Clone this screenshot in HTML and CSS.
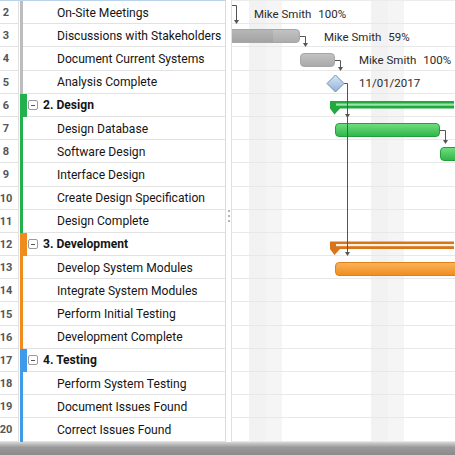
FILE: index.html
```html
<!DOCTYPE html>
<html>
<head>
<meta charset="utf-8">
<link rel="stylesheet" href="styles.css">
</head>
<body>
<div class="frame">
  <div class="main">
    <div class="left">
      <div class="row"><span class="num">2</span><span class="cbar gray"></span><span class="name">On-Site Meetings</span></div>
      <div class="row"><span class="num">3</span><span class="cbar gray"></span><span class="name">Discussions with Stakeholders</span></div>
      <div class="row"><span class="num">4</span><span class="cbar gray"></span><span class="name">Document Current Systems</span></div>
      <div class="row"><span class="num">5</span><span class="cbar gray"></span><span class="name">Analysis Complete</span></div>
      <div class="row"><span class="num">6</span><span class="cbar green wide"></span><span class="name sum"><span class="minus"></span>2. Design</span></div>
      <div class="row"><span class="num">7</span><span class="cbar green"></span><span class="name">Design Database</span></div>
      <div class="row"><span class="num">8</span><span class="cbar green"></span><span class="name">Software Design</span></div>
      <div class="row"><span class="num">9</span><span class="cbar green"></span><span class="name">Interface Design</span></div>
      <div class="row"><span class="num">10</span><span class="cbar green"></span><span class="name">Create Design Specification</span></div>
      <div class="row"><span class="num">11</span><span class="cbar green"></span><span class="name">Design Complete</span></div>
      <div class="row"><span class="num">12</span><span class="cbar orange wide"></span><span class="name sum"><span class="minus"></span>3. Development</span></div>
      <div class="row"><span class="num">13</span><span class="cbar orange"></span><span class="name">Develop System Modules</span></div>
      <div class="row"><span class="num">14</span><span class="cbar orange"></span><span class="name">Integrate System Modules</span></div>
      <div class="row"><span class="num">15</span><span class="cbar orange"></span><span class="name">Perform Initial Testing</span></div>
      <div class="row"><span class="num">16</span><span class="cbar orange"></span><span class="name">Development Complete</span></div>
      <div class="row"><span class="num">17</span><span class="cbar blue wide"></span><span class="name sum"><span class="minus"></span>4. Testing</span></div>
      <div class="row"><span class="num">18</span><span class="cbar blue"></span><span class="name">Perform System Testing</span></div>
      <div class="row"><span class="num">19</span><span class="cbar blue"></span><span class="name">Document Issues Found</span></div>
      <div class="row"><span class="num">20</span><span class="cbar blue"></span><span class="name">Correct Issues Found</span></div>
    </div>
    <div class="splitter"><span class="dot"></span><span class="dot"></span><span class="dot"></span></div>
    <div class="gantt">
      <div class="grow"></div><div class="grow"></div><div class="grow"></div><div class="grow"></div>
      <div class="grow"></div><div class="grow"></div><div class="grow"></div><div class="grow"></div>
      <div class="grow"></div><div class="grow"></div><div class="grow"></div><div class="grow"></div>
      <div class="grow"></div><div class="grow"></div><div class="grow"></div><div class="grow"></div>
      <div class="grow"></div><div class="grow"></div><div class="grow"></div>

      <div class="bar gray-bar b-disc"></div>
      <div class="bar gray-bar b-doc"></div>
      <div class="bar green-bar b-ddb"></div>
      <div class="bar green-bar b-sw"></div>
      <div class="bar orange-bar b-dev"></div>

      <svg class="overlay" width="222" height="441" viewBox="0 0 222 441">
        <defs>
          <linearGradient id="dia" x1="0" y1="0" x2="0" y2="1">
            <stop offset="0" stop-color="#dbe8f6"/>
            <stop offset="1" stop-color="#8fb1d6"/>
          </linearGradient>
        </defs>
        <polygon points="98,100 230,100 230,107.5 108,107.5 102.5,113.5 98,107.5" fill="#23a83f"/>
        <rect x="104" y="102.5" width="126" height="2.2" fill="#9be9a6"/>
        <polygon points="98,240.5 230,240.5 230,248 108,248 102.5,254 98,248" fill="#d8751a"/>
        <rect x="104" y="243" width="126" height="2.2" fill="#fff1de"/>

        <g fill="none" stroke="#555" stroke-width="1">
          <path d="M0 4.5 H4.5 V19"/>
          <path d="M68 35.5 H73.5 V42"/>
          <path d="M103 59.5 H108.5 V66"/>
          <path d="M112 82.5 H115.5 V252"/>
          <path d="M208 129.5 H213.5 V139"/>
        </g>
        <g fill="#555">
          <polygon points="2,19 7,19 4.5,23"/>
          <polygon points="71,42 76,42 73.5,46"/>
          <polygon points="106,66 111,66 108.5,70"/>
          <polygon points="113,113 118,113 115.5,117"/>
          <polygon points="113,251 118,251 115.5,255"/>
          <polygon points="211,139 216,139 213.5,143"/>
        </g>
        <polygon points="103.5,74 112,82.5 103.5,91 95,82.5" fill="url(#dia)" stroke="#6d8fb4" stroke-width="1"/>
      </svg>

      <span class="lbl l1">Mike Smith<span class="pct">100%</span></span>
      <span class="lbl l2">Mike Smith<span class="pct">59%</span></span>
      <span class="lbl l3">Mike Smith<span class="pct">100%</span></span>
      <span class="lbl l4">11/01/2017</span>
    </div>
  </div>
  <div class="shadow"></div>
</div>
</body>
</html>
```
FILE: styles.css
```css
* { box-sizing: border-box; }
html, body { margin: 0; padding: 0; }
body {
  width: 455px;
  height: 455px;
  overflow: hidden;
  background: #fff;
  font-family: Roboto, "Liberation Sans", sans-serif;
  color: #1c1c1c;
}
.frame {
  display: flex;
  flex-direction: column;
  height: 455px;
}
.main {
  display: flex;
  height: 442px;
  flex: none;
}
.left {
  width: 226px;
  flex: none;
  border-right: 1px solid #dcdcdc;
  border-top: 1px solid #b9d3ea;
  display: flex;
  flex-direction: column;
}
.row {
  display: flex;
  height: 23.2px;
  flex: none;
}
.num {
  width: 19px;
  flex: none;
  border-right: 1px solid #e0e0e0;
  border-bottom: 1px solid #e2e2e2;
  padding-right: 6px;
  font-size: 11px;
  font-weight: 700;
  color: #555;
  display: flex;
  align-items: center;
  justify-content: center;
  padding-top: 1px;
}
.cbar {
  width: 3px;
  margin-left: 1px;
  flex: none;
}
.cbar.wide { width: 7px; }
.gray { background: #bdbdbd; }
.green { background: #22b14c; }
.orange { background: #f08c1e; }
.blue { background: #3d9be9; }
.name {
  flex: 1;
  border-bottom: 1px solid #e2e2e2;
  display: flex;
  align-items: center;
  padding-left: 34px;
  padding-top: 1px;
  font-size: 12.1px;
  color: #151515;
  white-space: nowrap;
  overflow: hidden;
}
.name.sum {
  padding-left: 1px;
  font-weight: 700;
}
.minus {
  width: 10px;
  height: 10px;
  border: 1px solid #9a9a9a;
  border-radius: 2px;
  margin-right: 5px;
  position: relative;
  flex: none;
}
.minus::after {
  content: "";
  position: absolute;
  left: 2px;
  right: 2px;
  top: 3.5px;
  height: 1px;
  background: #555;
}
.splitter {
  width: 6px;
  flex: none;
  border-right: 1px solid #e0e0e0;
  display: flex;
  flex-direction: column;
  align-items: center;
  justify-content: center;
  gap: 3px;
  padding-bottom: 10px;
}
.dot {
  width: 2px;
  height: 2px;
  background: #b4b4b4;
}
.gantt {
  flex: 1;
  position: relative;
  overflow: hidden;
  border-top: 1px solid #ececec;
  display: flex;
  flex-direction: column;
  background:
    linear-gradient(to right,
      transparent 17px, #f2f2f2 17px, #f2f2f2 34px, #f5f5f5 34px, #f5f5f5 50px, transparent 50px,
      transparent 139px, #f2f2f2 139px, #f2f2f2 156px, #f5f5f5 156px, #f5f5f5 172px, transparent 172px);
}
.grow {
  height: 23.2px;
  flex: none;
  border-bottom: 1px solid #e8e8e8;
}
.bar {
  position: absolute;
  height: 14px;
  border-radius: 4px;
}
.gray-bar {
  background: linear-gradient(#c2c2c2, #aaaaaa);
  border: 1px solid #a6a6a6;
}
.b-disc {
  left: -10px;
  width: 78px;
  top: 28px;
  background: linear-gradient(to right, rgba(0,0,0,0.06) 0, rgba(0,0,0,0.06) 50px, transparent 50px), linear-gradient(#c2c2c2, #adadad);
}
.b-doc { left: 68px; width: 35px; top: 52px; }
.green-bar {
  background: linear-gradient(#6fdd7e, #31b74b);
  border: 1px solid #23a03b;
}
.b-ddb { left: 103px; width: 105px; top: 121.5px; }
.b-sw { left: 208px; width: 40px; top: 145.5px; }
.orange-bar {
  background: linear-gradient(#fbb257, #f08d22);
  border: 1px solid #e0801a;
}
.b-dev { left: 103px; width: 140px; top: 261px; }
.overlay {
  position: absolute;
  left: 0;
  top: 0;
}
.lbl {
  position: absolute;
  font-size: 11.5px;
  line-height: 16px;
  color: #2a2a2a;
  white-space: nowrap;
}
.pct { margin-left: 7px; }
.l1 { left: 22px; top: 5px; }
.l2 { left: 92px; top: 28px; }
.l3 { left: 127px; top: 51px; }
.l4 { left: 127px; top: 74px; }
.shadow {
  flex: 1;
  background: linear-gradient(#d6d6d6, #9a9a9a 40%, #8a8a8a);
}
```
